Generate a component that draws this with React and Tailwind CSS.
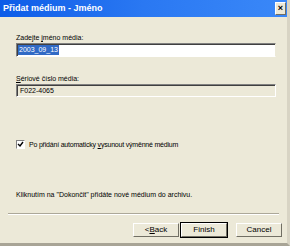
import React from "react";

const font = { fontFamily: '"Liberation Sans", Arial, sans-serif' };

const Button = ({ children, isDefault }) => (
  <button
    className={
      "w-[46px] h-[14px] flex items-center justify-center text-[8px] text-black bg-[#ece9d8] border border-t-white border-l-white border-b-[#716f64] border-r-[#716f64] " +
      (isDefault ? "outline outline-1 outline-black" : "")
    }
  >
    {children}
  </button>
);

const App = () => {
  return (
    <div
      className="w-[290px] h-[246px] bg-[#ece9d8] flex flex-col border-r-[3px] border-r-[#d8d4c4] border-b-[3px] border-b-[#a8a496] text-black"
      style={font}
    >
      {/* title bar */}
      <div className="h-[17px] flex items-center justify-between pl-[3px] pr-[1px] bg-gradient-to-r from-[#0c5ce8] via-[#2a78f2] to-[#3a88f8]">
        <span className="text-white font-bold text-[9px] leading-none">
          Přidat médium - Jméno
        </span>
        <div className="w-[11px] h-[13px] bg-[#ece9d8] border border-t-white border-l-white border-b-[#716f64] border-r-[#716f64] flex items-center justify-center text-[9px] font-bold leading-none">
          ×
        </div>
      </div>

      {/* content */}
      <div className="flex flex-col pl-[16px] pr-[11px]">
        <div className="mt-[16px] text-[7px] leading-[9px]">
          Zadejte <span className="underline">j</span>méno média:
        </div>
        <div className="mt-[1px] h-[14px] bg-white border border-t-[#808080] border-l-[#808080] border-b-white border-r-[#ece9d8] shadow-[inset_1px_1px_0_#404040] flex items-center pl-[1px]">
          <span className="bg-[#316ac5] text-white text-[7px] leading-[10px] px-[1px]">
            2003_09_13
          </span>
        </div>

        <div className="mt-[17px] text-[7px] leading-[9px]">
          <span className="underline">S</span>ériové číslo média:
        </div>
        <div className="mt-[1px] h-[13px] bg-[#ece9d8] border border-t-[#808080] border-l-[#808080] border-b-white border-r-white shadow-[inset_1px_1px_0_#404040] flex items-center pl-[3px]">
          <span className="text-[7px] leading-none">F022-4065</span>
        </div>

        <div className="mt-[43px] flex items-center gap-[4px]">
          <div className="w-[9px] h-[9px] bg-white border border-t-[#808080] border-l-[#808080] border-b-white border-r-white flex items-center justify-center">
            <svg width="7" height="7" viewBox="0 0 7 7">
              <path d="M1 3 L3 5 L6 1" stroke="#000" strokeWidth="1.4" fill="none" />
            </svg>
          </div>
          <span className="text-[7px] leading-none tracking-[-0.2px]">
            Po přidání automaticky <span className="underline">v</span>ysunout výměnné médium
          </span>
        </div>

        <div className="mt-[42px] text-[7px] leading-none">
          Kliknutím na "Dokončit" přidáte nové médium do archivu.
        </div>
      </div>

      {/* separator */}
      <div className="mt-[15px] mx-[8px] h-[2px] border-t border-t-[#aca899] border-b border-b-white" />

      {/* buttons */}
      <div className="mt-[8px] flex justify-end gap-[2px] pr-[5px]">
        <Button>
          &lt; <span className="underline">B</span>ack
        </Button>
        <Button isDefault>Finish</Button>
        <div className="w-[5px]" />
        <Button>Cancel</Button>
      </div>
    </div>
  );
};

export default App;
